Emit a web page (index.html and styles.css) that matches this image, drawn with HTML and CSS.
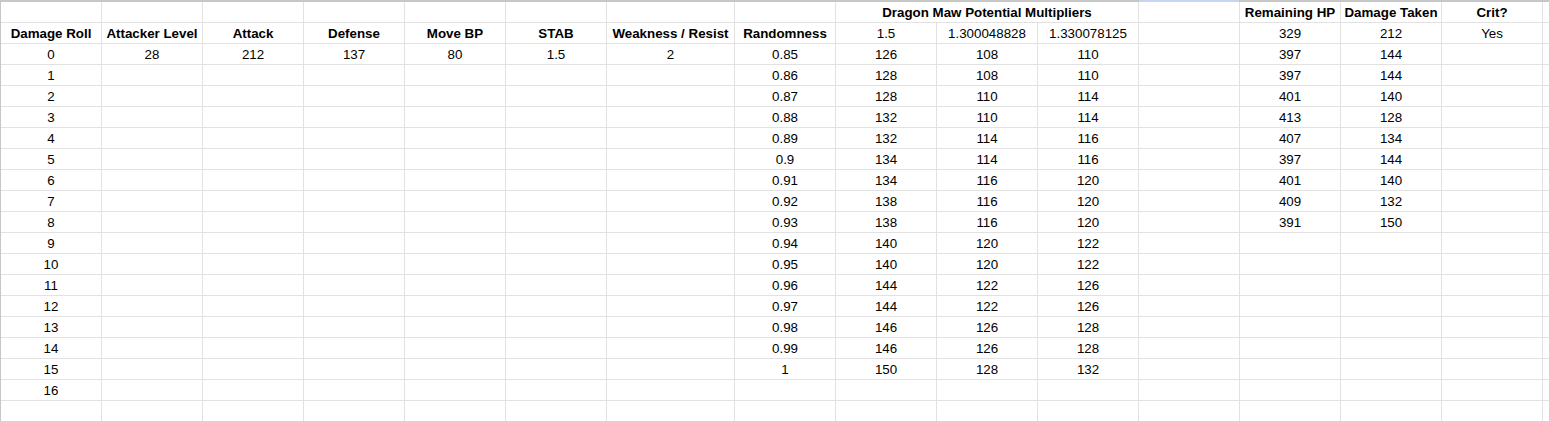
FILE: index.html
```html
<!DOCTYPE html>
<html>
<head>
<meta charset="utf-8">
<link rel="stylesheet" href="styles.css">
<title>Damage Roll Sheet</title>
</head>
<body>
<div class="sheet">
  <div class="row">
    <div class="c"></div><div class="c"></div><div class="c"></div><div class="c"></div><div class="c"></div><div class="c"></div><div class="c"></div><div class="c"></div>
    <div class="c b span3">Dragon Maw Potential Multipliers</div>
    <div class="c sel"></div>
    <div class="c b">Remaining HP</div><div class="c b">Damage Taken</div><div class="c b">Crit?</div><div class="c"></div>
  </div>
  <div class="row">
    <div class="c b">Damage Roll</div><div class="c b">Attacker Level</div><div class="c b">Attack</div><div class="c b">Defense</div><div class="c b">Move BP</div><div class="c b">STAB</div><div class="c b">Weakness / Resist</div><div class="c b">Randomness</div>
    <div class="c">1.5</div><div class="c">1.300048828</div><div class="c">1.330078125</div><div class="c"></div>
    <div class="c">329</div><div class="c">212</div><div class="c">Yes</div><div class="c"></div>
  </div>
  <div class="row">
    <div class="c">0</div><div class="c">28</div><div class="c">212</div><div class="c">137</div><div class="c">80</div><div class="c">1.5</div><div class="c">2</div><div class="c">0.85</div>
    <div class="c">126</div><div class="c">108</div><div class="c">110</div><div class="c"></div>
    <div class="c">397</div><div class="c">144</div><div class="c"></div><div class="c"></div>
  </div>
  <div class="row">
    <div class="c">1</div><div class="c"></div><div class="c"></div><div class="c"></div><div class="c"></div><div class="c"></div><div class="c"></div><div class="c">0.86</div>
    <div class="c">128</div><div class="c">108</div><div class="c">110</div><div class="c"></div>
    <div class="c">397</div><div class="c">144</div><div class="c"></div><div class="c"></div>
  </div>
  <div class="row">
    <div class="c">2</div><div class="c"></div><div class="c"></div><div class="c"></div><div class="c"></div><div class="c"></div><div class="c"></div><div class="c">0.87</div>
    <div class="c">128</div><div class="c">110</div><div class="c">114</div><div class="c"></div>
    <div class="c">401</div><div class="c">140</div><div class="c"></div><div class="c"></div>
  </div>
  <div class="row">
    <div class="c">3</div><div class="c"></div><div class="c"></div><div class="c"></div><div class="c"></div><div class="c"></div><div class="c"></div><div class="c">0.88</div>
    <div class="c">132</div><div class="c">110</div><div class="c">114</div><div class="c"></div>
    <div class="c">413</div><div class="c">128</div><div class="c"></div><div class="c"></div>
  </div>
  <div class="row">
    <div class="c">4</div><div class="c"></div><div class="c"></div><div class="c"></div><div class="c"></div><div class="c"></div><div class="c"></div><div class="c">0.89</div>
    <div class="c">132</div><div class="c">114</div><div class="c">116</div><div class="c"></div>
    <div class="c">407</div><div class="c">134</div><div class="c"></div><div class="c"></div>
  </div>
  <div class="row">
    <div class="c">5</div><div class="c"></div><div class="c"></div><div class="c"></div><div class="c"></div><div class="c"></div><div class="c"></div><div class="c">0.9</div>
    <div class="c">134</div><div class="c">114</div><div class="c">116</div><div class="c"></div>
    <div class="c">397</div><div class="c">144</div><div class="c"></div><div class="c"></div>
  </div>
  <div class="row">
    <div class="c">6</div><div class="c"></div><div class="c"></div><div class="c"></div><div class="c"></div><div class="c"></div><div class="c"></div><div class="c">0.91</div>
    <div class="c">134</div><div class="c">116</div><div class="c">120</div><div class="c"></div>
    <div class="c">401</div><div class="c">140</div><div class="c"></div><div class="c"></div>
  </div>
  <div class="row">
    <div class="c">7</div><div class="c"></div><div class="c"></div><div class="c"></div><div class="c"></div><div class="c"></div><div class="c"></div><div class="c">0.92</div>
    <div class="c">138</div><div class="c">116</div><div class="c">120</div><div class="c"></div>
    <div class="c">409</div><div class="c">132</div><div class="c"></div><div class="c"></div>
  </div>
  <div class="row">
    <div class="c">8</div><div class="c"></div><div class="c"></div><div class="c"></div><div class="c"></div><div class="c"></div><div class="c"></div><div class="c">0.93</div>
    <div class="c">138</div><div class="c">116</div><div class="c">120</div><div class="c"></div>
    <div class="c">391</div><div class="c">150</div><div class="c"></div><div class="c"></div>
  </div>
  <div class="row">
    <div class="c">9</div><div class="c"></div><div class="c"></div><div class="c"></div><div class="c"></div><div class="c"></div><div class="c"></div><div class="c">0.94</div>
    <div class="c">140</div><div class="c">120</div><div class="c">122</div><div class="c"></div>
    <div class="c"></div><div class="c"></div><div class="c"></div><div class="c"></div>
  </div>
  <div class="row">
    <div class="c">10</div><div class="c"></div><div class="c"></div><div class="c"></div><div class="c"></div><div class="c"></div><div class="c"></div><div class="c">0.95</div>
    <div class="c">140</div><div class="c">120</div><div class="c">122</div><div class="c"></div>
    <div class="c"></div><div class="c"></div><div class="c"></div><div class="c"></div>
  </div>
  <div class="row">
    <div class="c">11</div><div class="c"></div><div class="c"></div><div class="c"></div><div class="c"></div><div class="c"></div><div class="c"></div><div class="c">0.96</div>
    <div class="c">144</div><div class="c">122</div><div class="c">126</div><div class="c"></div>
    <div class="c"></div><div class="c"></div><div class="c"></div><div class="c"></div>
  </div>
  <div class="row">
    <div class="c">12</div><div class="c"></div><div class="c"></div><div class="c"></div><div class="c"></div><div class="c"></div><div class="c"></div><div class="c">0.97</div>
    <div class="c">144</div><div class="c">122</div><div class="c">126</div><div class="c"></div>
    <div class="c"></div><div class="c"></div><div class="c"></div><div class="c"></div>
  </div>
  <div class="row">
    <div class="c">13</div><div class="c"></div><div class="c"></div><div class="c"></div><div class="c"></div><div class="c"></div><div class="c"></div><div class="c">0.98</div>
    <div class="c">146</div><div class="c">126</div><div class="c">128</div><div class="c"></div>
    <div class="c"></div><div class="c"></div><div class="c"></div><div class="c"></div>
  </div>
  <div class="row">
    <div class="c">14</div><div class="c"></div><div class="c"></div><div class="c"></div><div class="c"></div><div class="c"></div><div class="c"></div><div class="c">0.99</div>
    <div class="c">146</div><div class="c">126</div><div class="c">128</div><div class="c"></div>
    <div class="c"></div><div class="c"></div><div class="c"></div><div class="c"></div>
  </div>
  <div class="row">
    <div class="c">15</div><div class="c"></div><div class="c"></div><div class="c"></div><div class="c"></div><div class="c"></div><div class="c"></div><div class="c">1</div>
    <div class="c">150</div><div class="c">128</div><div class="c">132</div><div class="c"></div>
    <div class="c"></div><div class="c"></div><div class="c"></div><div class="c"></div>
  </div>
  <div class="row">
    <div class="c">16</div><div class="c"></div><div class="c"></div><div class="c"></div><div class="c"></div><div class="c"></div><div class="c"></div><div class="c"></div>
    <div class="c"></div><div class="c"></div><div class="c"></div><div class="c"></div>
    <div class="c"></div><div class="c"></div><div class="c"></div><div class="c"></div>
  </div>
  <div class="row">
    <div class="c"></div><div class="c"></div><div class="c"></div><div class="c"></div><div class="c"></div><div class="c"></div><div class="c"></div><div class="c"></div>
    <div class="c"></div><div class="c"></div><div class="c"></div><div class="c"></div>
    <div class="c"></div><div class="c"></div><div class="c"></div><div class="c"></div>
  </div>
</div>
</body>
</html>
```
FILE: styles.css
```css
html, body {
  margin: 0;
  padding: 0;
  background: #ffffff;
  overflow: hidden;
}

.sheet {
  width: 1549px;
  border-top: 2px solid #c7c7c7;
  border-left: 1px solid #c7c7c7;
  box-sizing: border-box;
  font-family: "Liberation Sans", Arial, sans-serif;
  font-size: 13.33px;
  color: #000000;
}

.row {
  display: grid;
  grid-template-columns: repeat(6, 101px) 128px repeat(8, 101px) 1fr;
  height: 21px;
}

.c {
  box-sizing: border-box;
  height: 21px;
  border-right: 1px solid #e2e2e2;
  border-bottom: 1px solid #e2e2e2;
  line-height: 22px;
  text-align: center;
  white-space: nowrap;
  overflow: hidden;
}

.c:last-child {
  border-right: none;
}

.b {
  font-weight: bold;
}

.span3 {
  grid-column: span 3;
}

.sel {
  position: relative;
  overflow: visible;
}

.sel::before {
  content: "";
  position: absolute;
  left: 0;
  right: 0;
  top: -2px;
  height: 2px;
  background: #c5d5f2;
}
```
